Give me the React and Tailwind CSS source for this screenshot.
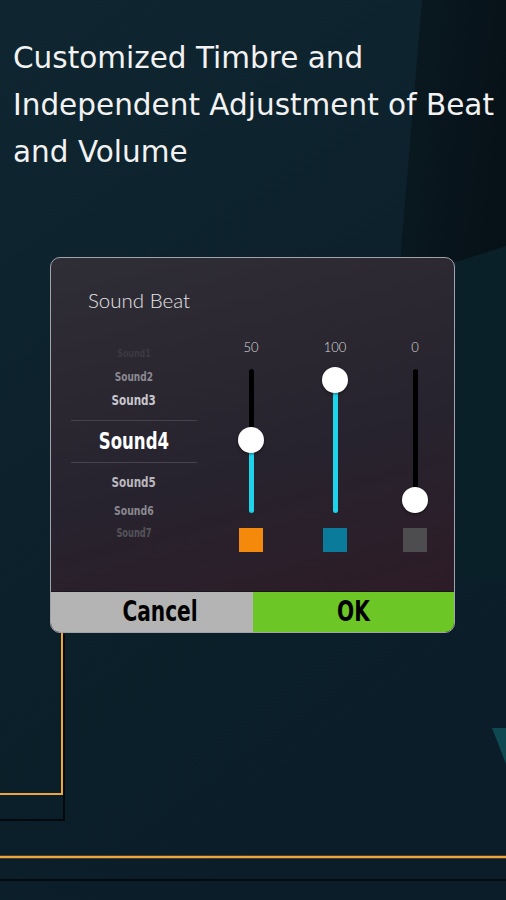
import React from "react";

const sounds = [
  { name: "Sound1", h: "h-[24px]", cls: "text-[11px] text-[#3c3a42]" },
  { name: "Sound2", h: "h-[22px]", cls: "text-[12.5px] text-[#8d8b93]" },
  { name: "Sound3", h: "h-[26px]", cls: "text-[14.5px] text-[#c8c6cc]" },
];

const soundsBelow = [
  { name: "Sound5", h: "h-[40px]", cls: "text-[14.5px] text-[#bab8be]" },
  { name: "Sound6", h: "h-[16px]", cls: "text-[13px] text-[#8b8990]" },
  { name: "Sound7", h: "h-[30px]", cls: "text-[11.5px] text-[#56545b]" },
];

const sliders = [
  { value: 50, swatch: "bg-[#f5890b]", ml: "ml-[30px]" },
  { value: 100, swatch: "bg-[#0b7b9c]", ml: "ml-[36px]" },
  { value: 0, swatch: "bg-[#4d4d4f]", ml: "ml-[32px]" },
];

const narrow = { fontFamily: '"DejaVu Sans Condensed", "Liberation Sans", sans-serif' };

function Backdrop() {
  return (
    <svg className="absolute inset-0" width="506" height="900" viewBox="0 0 506 900">
      <defs>
        <linearGradient id="bg" x1="0" y1="0" x2="0.4" y2="1">
          <stop offset="0" stopColor="#0f2630" />
          <stop offset="0.5" stopColor="#0c212b" />
          <stop offset="1" stopColor="#0a1d28" />
        </linearGradient>
        <linearGradient id="dark" x1="0" y1="0" x2="1" y2="0.3">
          <stop offset="0" stopColor="#0a1a22" />
          <stop offset="1" stopColor="#071118" />
        </linearGradient>
      </defs>
      <rect width="506" height="900" fill="url(#bg)" />
      <polygon points="422,0 506,0 506,248 456,262 400,262" fill="url(#dark)" />
      <polygon points="456,262 506,246 506,580 456,580" fill="#0a2028" />
      <polygon points="492,728 506,728 506,764" fill="#0e4850" />
      <polyline points="64,634 64,820 0,820" fill="none" stroke="#03090d" strokeWidth="2" />
      <polyline points="62,632 62,794 0,794" fill="none" stroke="#f0a53a" strokeWidth="2" />
      <line x1="0" y1="880" x2="506" y2="880" stroke="#03090d" strokeWidth="2" />
      <line x1="0" y1="857" x2="506" y2="857" stroke="#f0a53a" strokeWidth="2.5" />
    </svg>
  );
}

function Squeezed({ children }) {
  return <span className="inline-block scale-x-[0.8]">{children}</span>;
}

function Slider({ value, swatch, ml }) {
  const center = 131 - value * 1.2;
  const fill = value === 0 ? 0 : 144 - center;
  return (
    <div className={`flex w-12 flex-col items-center ${ml}`}>
      <div className="h-[10px] text-[13px] font-light leading-[10px] text-[#dcdcdc]" style={{ fontFamily: "Lato, sans-serif" }}>
        {value}
      </div>
      <div className="relative mt-[17px] h-[144px] w-[5px] rounded-full bg-black">
        <div className="absolute bottom-0 left-0 w-[5px] rounded-full bg-[#1fd3ea]" style={{ height: fill }} />
        <div
          className="absolute left-1/2 h-[26px] w-[26px] -translate-x-1/2 rounded-full bg-white shadow-[0_1px_3px_rgba(0,0,0,0.5)]"
          style={{ top: center - 13 }}
        />
      </div>
      <div className={`mt-[15px] h-[24px] w-[24px] ${swatch}`} />
    </div>
  );
}

export default function App() {
  return (
    <div className="relative h-[900px] w-[506px] overflow-hidden bg-[#0b1f29]">
      <Backdrop />
      <div className="relative">
        <h1
          className="pl-[13px] pt-[35px] text-[29.5px] font-normal leading-[47px] text-[#f2f2f2]"
          style={{ fontFamily: '"DejaVu Sans", sans-serif' }}
        >
          Customized Timbre and
          <br />
          Independent Adjustment of Beat
          <br />
          and Volume
        </h1>

        <div className="ml-[50px] mt-[81px] w-[405px] overflow-hidden rounded-[10px] border-[1.5px] border-[#a3a1aa] bg-[linear-gradient(165deg,#2f2d36_0%,#27232e_55%,#2e1a25_100%)]">
          <div className="h-[333px]">
            <div
              className="pl-[37px] pt-[29px] text-[20.5px] font-light leading-[26px] text-[#e4e4e6]"
              style={{ fontFamily: "Lato, sans-serif" }}
            >
              Sound Beat
            </div>
            <div className="mt-[29px] flex">
              <div className="ml-5 w-[126px] font-bold" style={narrow}>
                {sounds.map((s) => (
                  <div key={s.name} className={`flex items-center justify-center ${s.h} ${s.cls}`}>
                    <Squeezed>{s.name}</Squeezed>
                  </div>
                ))}
                <div className="h-[6px]" />
                <div className="flex h-[43px] items-center justify-center border-y border-[#47434e] text-[23px] text-white">
                  <Squeezed>Sound4</Squeezed>
                </div>
                {soundsBelow.map((s) => (
                  <div key={s.name} className={`flex items-center justify-center ${s.h} ${s.cls}`}>
                    <Squeezed>{s.name}</Squeezed>
                  </div>
                ))}
              </div>
              {sliders.map((s) => (
                <Slider key={s.value} {...s} />
              ))}
            </div>
          </div>
          <div className="flex h-[41px] border-t border-[#1a161d] text-[28px] font-bold leading-none text-black" style={narrow}>
            <button className="flex w-1/2 items-center justify-center bg-[#b4b4b4] pl-4">
              <Squeezed>Cancel</Squeezed>
            </button>
            <button className="flex w-1/2 items-center justify-center bg-[#6cc626]">
              <Squeezed>OK</Squeezed>
            </button>
          </div>
        </div>
      </div>
    </div>
  );
}
